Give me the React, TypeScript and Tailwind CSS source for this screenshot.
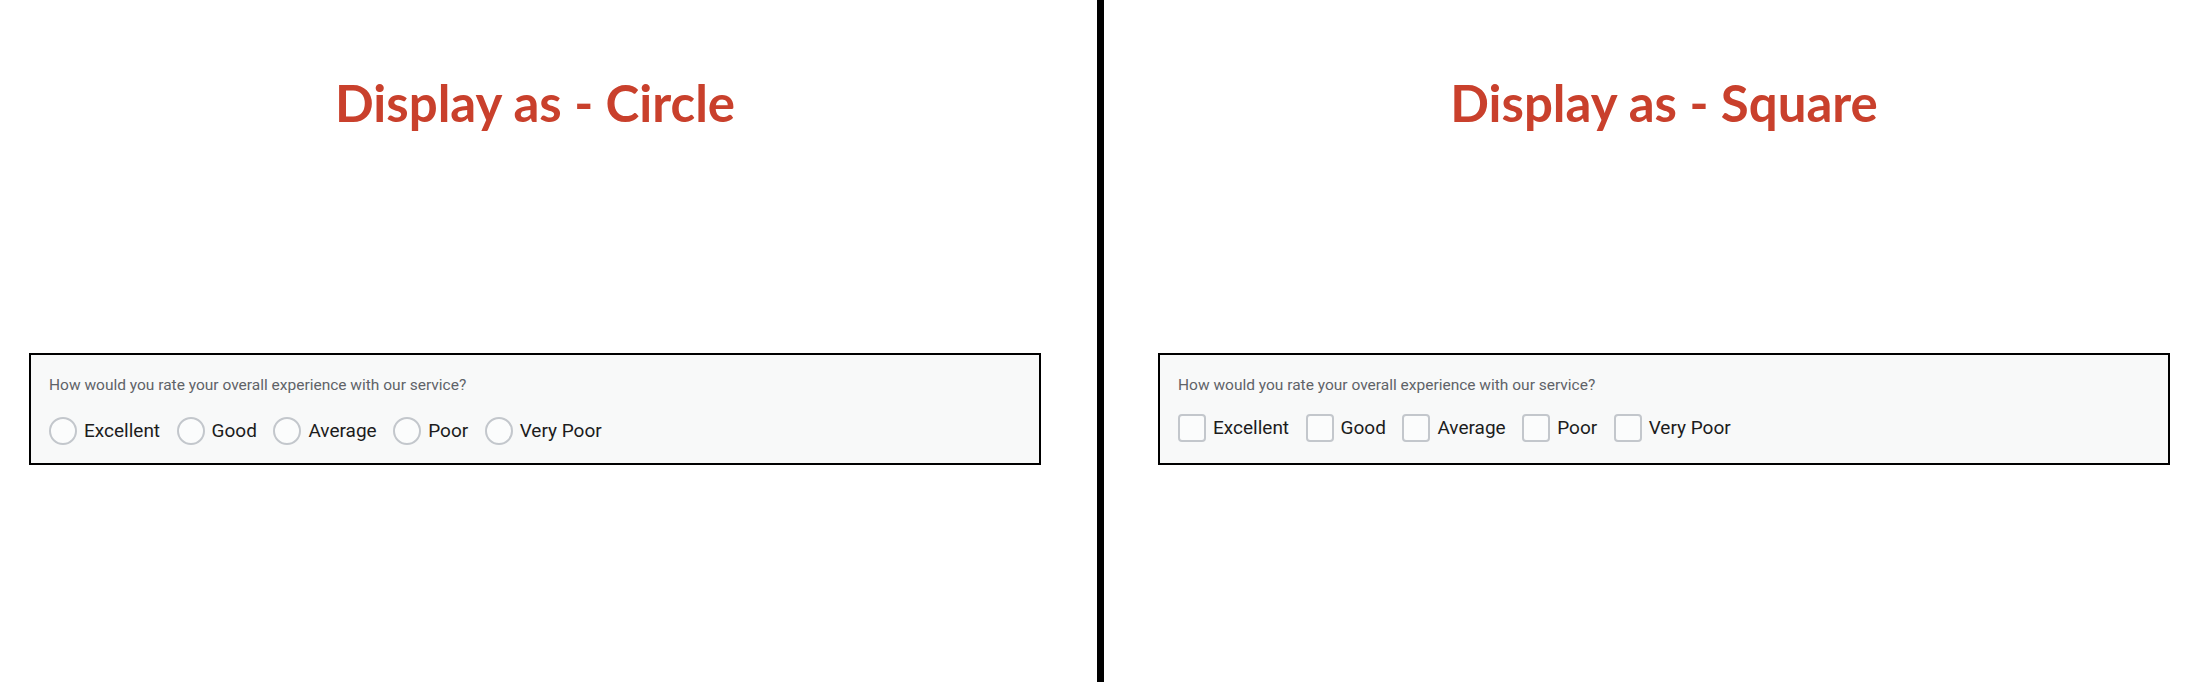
import React from 'react';

const OPTIONS = ['Excellent', 'Good', 'Average', 'Poor', 'Very Poor'];

type Shape = 'circle' | 'square';

function RatingCard({ shape }: { shape: Shape }): React.JSX.Element {
  const isCircle = shape === 'circle';

  return (
    <div
      className={`w-[1012px] border-2 border-black bg-[#f8f9f9] pl-[18px] pt-[20px] ${
        isCircle ? 'pb-[18px]' : 'pb-[21px]'
      }`}
    >
      <p className="text-[15.5px] leading-[20px] text-[#5f6368] font-['Roboto',sans-serif]">
        How would you rate your overall experience with our service?
      </p>
      <div className={`flex items-center gap-[16.5px] ${isCircle ? 'mt-[22px]' : 'mt-[19px]'}`}>
        {OPTIONS.map((option) => (
          <label key={option} className="flex items-center gap-[7px] cursor-pointer">
            <span
              className={`block w-[28px] h-[28px] border-2 border-[#c3c7cc] bg-[#fbfcfc] ${
                isCircle ? 'rounded-full' : 'rounded-[4px]'
              }`}
            />
            <span className="text-[19px] leading-[28px] text-[#1c1c1c] font-['Roboto',sans-serif]">
              {option}
            </span>
          </label>
        ))}
      </div>
    </div>
  );
}

function Panel({ title, shape, className }: { title: string; shape: Shape; className: string }): React.JSX.Element {
  return (
    <div className={className}>
      <div className="w-[1012px] flex flex-col">
        <h1 className="text-center text-[51px] leading-[51px] font-bold text-[#c9402c] font-['Lato',sans-serif]">
          {title}
        </h1>
        <div className="mt-[225px]">
          <RatingCard shape={shape} />
        </div>
      </div>
    </div>
  );
}

function App(): React.JSX.Element {
  return (
    <div className="flex w-[2206px] h-[682px] bg-white overflow-hidden">
      <Panel title="Display as - Circle" shape="circle" className="w-[1097px] pl-[29px] pt-[77px]" />
      <div className="w-[7px] h-full bg-black" />
      <Panel title="Display as - Square" shape="square" className="flex-1 pl-[54px] pt-[77px]" />
    </div>
  );
}

export default App;
